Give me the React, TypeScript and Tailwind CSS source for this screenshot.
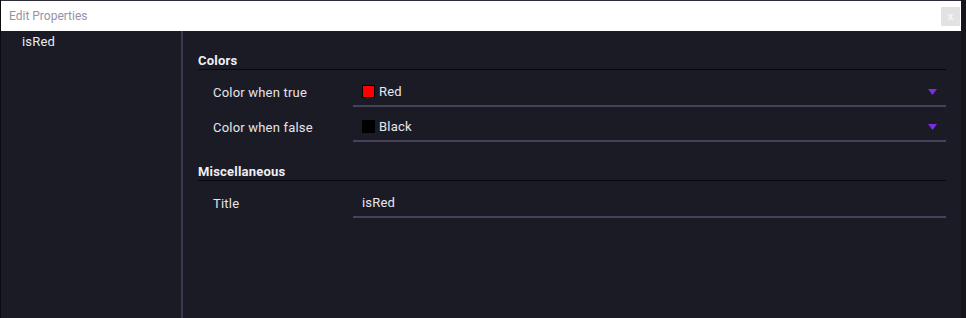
import React from 'react'

type Row = { label: string; value: string; swatch?: string; dropdown?: boolean }

const groups: Array<{ title: string; rows: Row[] }> = [
  {
    title: 'Colors',
    rows: [
      { label: 'Color when true', value: 'Red', swatch: '#ff0000', dropdown: true },
      { label: 'Color when false', value: 'Black', swatch: '#000000', dropdown: true },
    ],
  },
  {
    title: 'Miscellaneous',
    rows: [{ label: 'Title', value: 'isRed' }],
  },
]

function Caret() {
  return (
    <svg width="9" height="6" viewBox="0 0 9 6" className="shrink-0">
      <path d="M0 0 H9 L4.5 6 Z" fill="#7b2ee0" />
    </svg>
  )
}

function PropRow({ row }: { row: Row }) {
  return (
    <div className="flex h-[35px]">
      <div className="w-[155px] shrink-0 pl-[15px] pt-[6px] flex items-center text-[13px] tracking-[0.2px] text-[#e4e4ec]">{row.label}</div>
      <div className="flex-1 flex items-center pt-[6px] pl-[9px] pr-[9px] border-b-2 border-[#45435c]">
        {row.swatch && <div className="w-[13px] h-[13px] border border-black mr-[4px]" style={{ background: row.swatch }} />}
        <div className="flex-1 text-[13px] tracking-[0.2px] text-[#e8e8f0]">{row.value}</div>
        {row.dropdown && <Caret />}
      </div>
    </div>
  )
}

export default function App() {
  return (
    <div className="w-[966px] h-[318px] bg-[#15151b] flex overflow-hidden" style={{ fontFamily: 'Roboto, "Liberation Sans", sans-serif' }}>
      <div className="w-[961px] flex flex-col border-l border-[#0a0a0f]">
        <div className="h-[1px] bg-[#2e2e38]" />
        <div className="h-[30px] bg-white flex items-center justify-between pl-[8px] pr-[1px]">
          <div className="text-[12px] text-[#9592a6]">Edit Properties</div>
          <div className="w-[19px] h-[19px] bg-[#e2e2e2] flex items-center justify-center text-[11px] font-bold text-[#f4f4f4] leading-none">x</div>
        </div>
        <div className="flex-1 flex bg-[#1b1b26]">
          <div className="w-[182px] shrink-0 border-r-2 border-[#3a3950]">
            <div className="pl-[21px] pt-[3px] h-[22px] text-[13px] tracking-[0.2px] text-[#ececf2] leading-[16px]">isRed</div>
          </div>
          <div className="flex-1 pl-[15px] pr-[15px] pt-[22px]">
            {groups.map((g, i) => (
              <div key={g.title} className={i > 0 ? 'mt-[22px]' : ''}>
                <div className="h-[16px] leading-[16px] text-[13px] font-bold tracking-[0.2px] text-[#f0f0f4]">{g.title}</div>
                <div className="h-[1px] bg-[#08080c] mb-[2px]" />
                {g.rows.map(r => (
                  <PropRow key={r.label} row={r} />
                ))}
              </div>
            ))}
          </div>
        </div>
      </div>
    </div>
  )
}
